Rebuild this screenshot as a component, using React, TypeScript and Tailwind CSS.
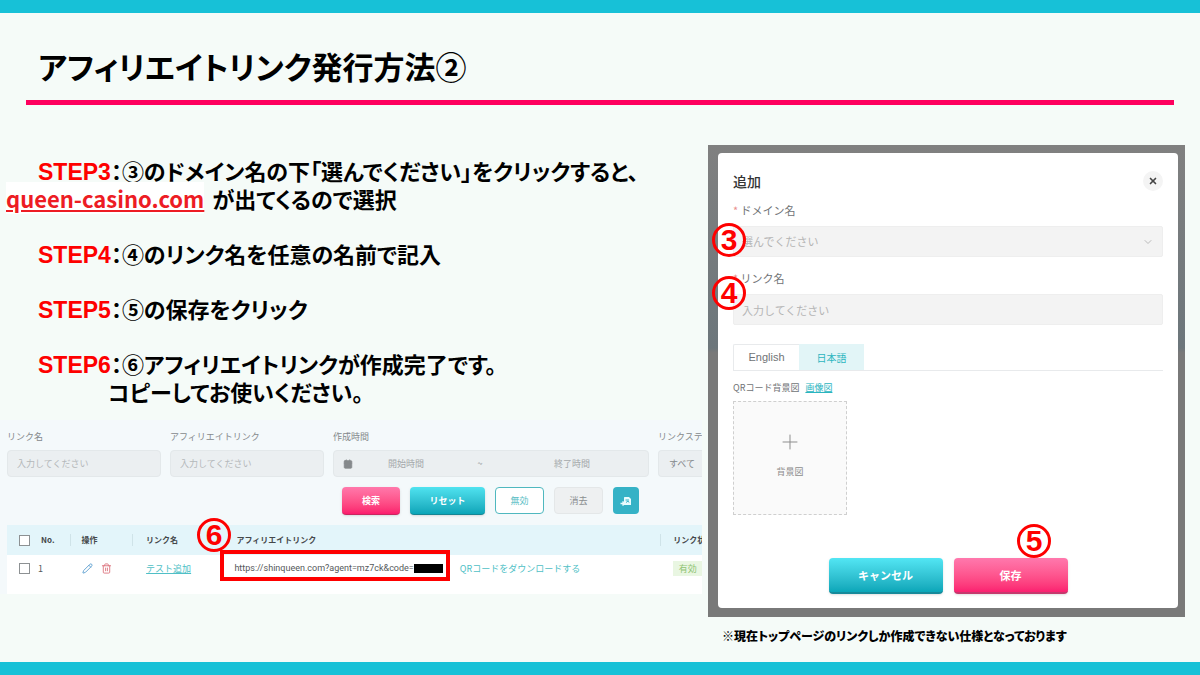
import React from 'react';
import { Calendar, ChevronDown, Pencil, Plus, Trash2, X } from 'lucide-react';

interface BadgeProps {
  label: string;
  className: string;
}

const Badge: React.FC<BadgeProps> = ({ label, className }) => (
  <span
    className={`absolute flex h-[34px] w-[34px] items-center justify-center rounded-full border-[3px] border-[#fe0000] font-['Liberation_Sans'] text-[30px] leading-none font-bold text-[#fe0000] ${className}`}
  >
    {label}
  </span>
);

interface StepProps {
  name: string;
  text: string;
  children?: React.ReactNode;
}

const Step: React.FC<StepProps> = ({ name, text, children }) => (
  <li>
    <p className="pl-[38px]">
      <span className="font-['Liberation_Sans'] text-[23px] leading-none text-[#fe0000]">{name}</span>
      ：{text}
    </p>
    {children}
  </li>
);

const inputClass =
  'h-[27px] w-full rounded-sm border border-[#e3e8ea] bg-[#ebeff1] px-[9px] text-[9px] text-gray-500 placeholder:text-[#b4b8ba]';

const SearchForm = () => (
  <form className="flex flex-col gap-[10px] pt-[10px] text-[9px] text-[#85898c]">
    <div className="grid grid-cols-[154fr_154fr_316fr_44fr] gap-[9px] pl-[7px]">
      <label className="flex flex-col gap-[6px] leading-[14px]">
        リンク名
        <input className={inputClass} placeholder="入力してください" />
      </label>
      <label className="flex flex-col gap-[6px] leading-[14px]">
        アフィリエイトリンク
        <input className={inputClass} placeholder="入力してください" />
      </label>
      <fieldset className="flex flex-col gap-[6px] leading-[14px]">
        <legend className="contents">作成時間</legend>
        <div className="flex h-[27px] items-center rounded-sm border border-[#e3e8ea] bg-[#ebeff1] pr-[5px] pl-[9px]">
          <Calendar className="h-[10px] w-[10px] fill-[#85898c]" />
          <input
            aria-label="開始時間"
            className="w-[106px] min-w-0 flex-none text-center placeholder:text-[#a4a8aa]"
            placeholder="開始時間"
          />
          <span className="flex-1 text-center">~</span>
          <input
            aria-label="終了時間"
            className="w-[142px] min-w-0 flex-none text-center placeholder:text-[#a4a8aa]"
            placeholder="終了時間"
          />
        </div>
      </fieldset>
      <label className="flex min-w-0 flex-col gap-[6px] overflow-hidden leading-[14px] whitespace-nowrap">
        リンクステ
        <select className="h-[27px] w-full appearance-none rounded-l-sm border border-r-0 border-[#e3e8ea] bg-[#ebeff1] pl-[10px] text-[9px]">
          <option>すべて</option>
        </select>
      </label>
    </div>
    <div className="flex h-[28px] justify-end gap-[10px] pr-[63px] font-bold">
      <button
        type="button"
        className="w-[58px] rounded-sm border-b border-[#c9265f] bg-linear-to-b from-[#ff78ab] to-[#fb1a6d] text-white shadow-sm"
      >
        検索
      </button>
      <button
        type="button"
        className="w-[75px] rounded-sm border-b border-[#168593] bg-linear-to-b from-[#4fe3f0] to-[#08a5b8] text-white shadow-sm"
      >
        リセット
      </button>
      <button
        type="button"
        className="h-[27px] w-[49px] rounded-sm border border-[#4fb8bf] bg-white font-normal text-[#5bc0c6]"
      >
        無効
      </button>
      <button
        type="button"
        className="h-[27px] w-[49px] rounded-sm border border-[#e4e7e8] bg-[#eef0f1] font-normal text-[#8b8e90]"
      >
        消去
      </button>
      <button
        type="button"
        aria-label="エクスポート"
        className="flex h-[27px] w-[26px] items-center justify-center rounded-sm bg-[#35b2c6]"
      >
        <svg viewBox="0 0 12 12" className="h-[12px] w-[12px]">
          <path d="M4 2.5Q4 2 4.500 2H9l2 2v6H4z" fill="#e9fbfd" />
          <path d="M5.500 5h3.500M6 7.500l2-1.500 1 1.500" stroke="#35b2c6" fill="none" />
          <path d="M.500 8.500h3.500M2.500 6.500l2 2-2 2" stroke="#e9fbfd" strokeWidth="1.500" fill="none" />
        </svg>
      </button>
    </div>
  </form>
);

const LinkTable = () => (
  <div className="relative mt-[10px] ml-[7px]">
    <table className="w-full table-fixed bg-white text-left text-[9px] whitespace-nowrap text-[#55585a]">
      <colgroup>
        <col className="w-[9%]" />
        <col className="w-[9%]" />
        <col className="w-[14%]" />
        <col className="w-[32%]" />
        <col className="w-[30%]" />
        <col className="w-[6%]" />
      </colgroup>
      <thead>
        <tr className="h-[30px] bg-[#e3f5fa] text-[8px] text-[#45484a]">
          <th className="pl-[12px]">
            <div className="flex items-center gap-[11px]">
              <input
                type="checkbox"
                aria-label="すべて選択"
                className="h-[11px] w-[11px] appearance-none border border-[#8d9193] bg-white"
              />
              No.
            </div>
          </th>
          <th>
            <div className="border-l border-[#cfe3e8] pl-[11px]">操作</div>
          </th>
          <th>
            <div className="border-l border-[#cfe3e8] pl-[13px]">リンク名</div>
          </th>
          <th className="pl-[7px]">アフィリエイトリンク</th>
          <th />
          <th className="overflow-hidden">
            <div className="border-l border-[#cfe3e8] pl-[12px]">リンク状</div>
          </th>
        </tr>
      </thead>
      <tbody>
        <tr className="h-[27px]">
          <td className="pl-[12px]">
            <div className="flex items-center gap-[8px]">
              <input
                type="checkbox"
                aria-label="1を選択"
                className="h-[11px] w-[11px] appearance-none border border-[#8d9193] bg-white"
              />
              1
            </div>
          </td>
          <td className="pl-[12px]">
            <div className="flex gap-[8px]">
              <button type="button" aria-label="編集">
                <Pencil className="h-[11px] w-[11px] text-[#5d9fd0]" />
              </button>
              <button type="button" aria-label="削除">
                <Trash2 className="h-[11px] w-[11px] text-[#dd7580]" />
              </button>
            </div>
          </td>
          <td className="pl-[14px]">
            <a href="#" className="text-[#4fbfc6] underline">
              テスト追加
            </a>
          </td>
          <td className="pl-[5px] font-['Roboto']">
            <div className="flex items-center">
              https://shinqueen.com?agent=mz7ck&amp;code=
              <span className="h-[9px] w-[29px] bg-black" />
            </div>
          </td>
          <td className="pl-[8px]">
            <a href="#" className="text-[#4fbfc6]">
              QRコードをダウンロードする
            </a>
          </td>
          <td className="pl-[13px]">
            <span className="block bg-[#e9f6e2] text-center leading-[15px] text-[#8fc373]">有効</span>
          </td>
        </tr>
        <tr className="h-[12px]">
          <td colSpan={6} />
        </tr>
      </tbody>
    </table>
    <div className="absolute top-[25px] left-[213px] h-[31px] w-[230px] border-4 border-[#fe0000]" />
    <Badge label="6" className="top-[-7px] left-[190px]" />
  </div>
);

const AddDialog = () => (
  <div className="bg-linear-to-b from-[#808080] via-[#6c767b] via-43% to-[#797979] to-44% pt-[8px] pr-[7px] pb-[9px] pl-[10px]">
    <div
      role="dialog"
      aria-labelledby="dialog-title"
      className="relative rounded-sm bg-white px-[15px] pb-[14px] text-[11px] text-[#707376]"
    >
      <div className="flex items-center justify-between pt-[17px]">
        <h2 id="dialog-title" className="text-[14px] leading-[22px] font-medium text-[#333]">
          追加
        </h2>
        <button
          type="button"
          aria-label="閉じる"
          className="flex h-[20px] w-[20px] items-center justify-center rounded-full bg-[#f4f4f4] text-[#444]"
        >
          <X className="h-[10px] w-[10px]" strokeWidth={4} />
        </button>
      </div>
      <label className="mt-[10px] block leading-[16px]" htmlFor="domain">
        <span className="text-[#e98d8d]">*</span> ドメイン名
      </label>
      <div className="relative mt-[8px]">
        <select
          id="domain"
          className="h-[31px] w-full appearance-none rounded-xs border border-[#eeeeee] bg-[#f3f3f3] px-[8px] text-[#b5b5b5]"
        >
          <option>選んでください</option>
        </select>
        <ChevronDown className="pointer-events-none absolute top-[10px] right-[9px] h-[12px] w-[12px] text-[#bbb]" />
      </div>
      <label className="mt-[13px] block leading-[16px]" htmlFor="link-name">
        <span className="text-[#e98d8d]">*</span> リンク名
      </label>
      <input
        id="link-name"
        className="mt-[8px] h-[31px] w-full rounded-xs border border-[#eeeeee] bg-[#f3f3f3] px-[8px] placeholder:text-[#b5b5b5]"
        placeholder="入力してください"
      />
      <div role="tablist" className="mt-[19px] flex border-b border-[#e8eaec]">
        <button
          type="button"
          role="tab"
          aria-selected="false"
          className="h-[26px] w-[66px] rounded-tl-xs border-t border-l border-[#e8eaec] font-['Liberation_Sans']"
        >
          English
        </button>
        <button type="button" role="tab" aria-selected="true" className="h-[26px] w-[65px] bg-[#e2f5f7] text-[10px] text-[#2bb5bf]">
          日本語
        </button>
      </div>
      <p className="mt-[9px] flex gap-[6px] text-[9px] leading-[16px]">
        QRコード背景図
        <a href="#" className="text-[#2bb5bf] underline">
          画像図
        </a>
      </p>
      <button
        type="button"
        className="mt-[5px] flex h-[114px] w-[114px] flex-col items-center justify-center gap-[10px] border border-dashed border-[#cfcfcf] bg-[#fafafa] pb-[6px] text-[9px] leading-[16px] text-[#8d8d8d]"
      >
        <Plus className="h-[24px] w-[24px]" strokeWidth={1} />
        背景図
      </button>
      <div className="mt-[43px] flex justify-center gap-[11px] font-bold text-white">
        <button
          type="button"
          className="h-[36px] w-[114px] rounded-sm border-b-2 border-[#16899a] bg-linear-to-b from-[#52e6f4] to-[#08a6b8] shadow-sm"
        >
          キャンセル
        </button>
        <button
          type="button"
          className="h-[36px] w-[114px] rounded-sm border-b-2 border-[#c5386d] bg-linear-to-b from-[#ff78ad] to-[#fb1e70] shadow-sm"
        >
          保存
        </button>
      </div>
      <Badge label="3" className="top-[70px] left-[-6px]" />
      <Badge label="4" className="top-[123px] left-[-6px]" />
      <Badge label="5" className="top-[371px] left-[299px]" />
    </div>
  </div>
);

export default function App() {
  return (
    <div className="flex min-h-screen flex-col border-t-[13px] border-b-[13px] border-[#17c1d7] bg-[#f5fbf8] font-['Liberation_Sans','Noto_Sans_CJK_JP',sans-serif] text-black">
      <header className="mx-[26px] border-b-[5px] border-[#fe005e] pt-[32px] pb-[7px] pl-[12px]">
        <h1 className="text-[31px] leading-[48px] font-bold [font-feature-settings:'palt']">
          アフィリエイトリンク発行方法②
        </h1>
      </header>
      <main className="grid grid-cols-[708fr_477fr] pt-[40px] pr-[15px]">
        <section className="min-w-0 pr-[6px]">
          <ol className="flex flex-col gap-[27px] pt-[11px] font-['Noto_Sans_CJK_JP'] text-[22px] leading-7 font-bold [font-feature-settings:'palt']">
            <Step name="STEP3" text="③のドメイン名の下「選んでください」をクリックすると、">
              <p className="pl-[6px]">
                <a href="#" className="mr-[3px] bg-white text-[#ed1c24] underline">
                  queen-casino.com
                </a>{' '}
                が出てくるので選択
              </p>
            </Step>
            <Step name="STEP4" text="④のリンク名を任意の名前で記入" />
            <Step name="STEP5" text="⑤の保存をクリック" />
            <Step name="STEP6" text="⑥アフィリエイトリンクが作成完了です。">
              <p className="pl-[108px]">コピーしてお使いください。</p>
            </Step>
          </ol>
          <div className="mt-[15px] bg-[#f4f9fb] font-['Noto_Sans_CJK_JP']">
            <SearchForm />
            <LinkTable />
          </div>
        </section>
        <section className="min-w-0 font-['Noto_Sans_CJK_JP']">
          <AddDialog />
          <p className="mt-[8px] pl-[14px] text-[12px] leading-[22px] font-black [font-feature-settings:'palt']">
            ※現在トップページのリンクしか作成できない仕様となっております
          </p>
        </section>
      </main>
    </div>
  );
}
